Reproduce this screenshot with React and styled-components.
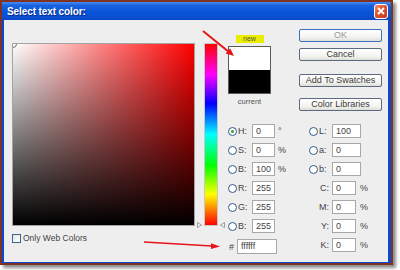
import styled, { createGlobalStyle } from "styled-components";

const GlobalStyle = createGlobalStyle`
  html, body { margin: 0; padding: 0; background: #ffffff; }
  body {
    width: 400px;
    height: 270px;
    overflow: hidden;
    font-family: "Liberation Sans", Arial, sans-serif;
  }
`;

const Frame = styled.div`
  position: relative;
  width: 389px;
  height: 261px;
  border: 2px solid #7d3222;
  box-shadow: 3px 3px 3px rgba(0, 0, 0, 0.45);
  background: #0b46d4;
  display: flex;
  flex-direction: column;
`;

const TitleBar = styled.div`
  height: 18px;
  flex: none;
  display: flex;
  align-items: center;
  justify-content: space-between;
  padding: 0 3px 0 5px;
  background: linear-gradient(#4a8cf0 0%, #1a63e0 18%, #0655d8 55%, #0a4fd0 85%, #0846c4 100%);
`;

const Title = styled.span`
  color: #ffffff;
  font-weight: bold;
  font-size: 10px;
  letter-spacing: -0.1px;
  text-shadow: 1px 1px 0 #0a2a8a;
`;

const CloseButton = styled.div`
  width: 14px;
  height: 15px;
  box-sizing: border-box;
  border: 1px solid #ffffff;
  border-radius: 3px;
  background: linear-gradient(135deg, #f08a64 0%, #dc5430 45%, #c23c16 100%);
  display: flex;
  align-items: center;
  justify-content: center;
`;

const Body = styled.div`
  flex: 1;
  margin: 0 3px 1px 2px;
  background: #eeeeee;
  display: flex;
  align-items: flex-start;
  padding: 9px 0 0 8px;
`;

const LeftCol = styled.div`
  margin-top: 14px;
  display: flex;
  flex-direction: column;
  gap: 7px;
`;

const ColorField = styled.div`
  position: relative;
  width: 183px;
  height: 183px;
  box-sizing: border-box;
  border: 1px solid #a3a3a3;
  overflow: hidden;
  background: linear-gradient(to bottom, rgba(0, 0, 0, 0), #000000),
    linear-gradient(to right, #ffffff, #ff0000);
`;

const FieldMarker = styled.div`
  position: absolute;
  top: -4px;
  left: -4px;
  width: 8px;
  height: 8px;
  box-sizing: border-box;
  border-radius: 50%;
  border: 1px solid #707070;
`;

const CheckRow = styled.label`
  display: flex;
  align-items: center;
  gap: 2px;
  font-size: 8.5px;
  color: #444444;
`;

const CheckBox = styled.span`
  width: 9px;
  height: 9px;
  box-sizing: border-box;
  border: 1px solid #3a6496;
  background: linear-gradient(135deg, #e4e4dc, #ffffff);
`;

const HueWrap = styled.div`
  position: relative;
  margin: 14px 0 0 9px;
  width: 14px;
  height: 183px;
`;

const HueBar = styled.div`
  width: 14px;
  height: 183px;
  box-sizing: border-box;
  border: 1px solid #c8c8c8;
  background: linear-gradient(
    to bottom,
    #ff0000 0%,
    #ff00ff 17%,
    #0000ff 33%,
    #00ffff 50%,
    #00ff00 67%,
    #ffff00 83%,
    #ff0000 100%
  );
`;

const HueArrow = styled.svg`
  position: absolute;
  bottom: -2px;
  ${(p) => (p.side === "left" ? "left: -7px;" : "right: -7px;")}
`;

const RightCol = styled.div`
  margin-left: 10px;
  display: flex;
  flex-direction: column;
`;

const TopRow = styled.div`
  display: flex;
  align-items: flex-start;
`;

const SwatchCol = styled.div`
  width: 43px;
  margin-top: 6px;
  display: flex;
  flex-direction: column;
  align-items: center;
`;

const NewTag = styled.div`
  width: 28px;
  height: 8px;
  background: #ecec00;
  color: #555555;
  font-size: 7px;
  line-height: 8px;
  text-align: center;
`;

const Swatch = styled.div`
  margin-top: 3px;
  width: 43px;
  height: 48px;
  box-sizing: border-box;
  border: 1px solid #5a5a5a;
  background: linear-gradient(to bottom, #ffffff 50%, #000000 50%);
`;

const SwatchCaption = styled.div`
  margin-top: 3px;
  font-size: 7.5px;
  color: #555555;
`;

const ButtonCol = styled.div`
  margin-left: 28px;
  display: flex;
  flex-direction: column;
`;

const Button = styled.div`
  width: 83px;
  height: 13px;
  box-sizing: border-box;
  margin-top: ${(p) => p.gap || 0}px;
  border: 1px solid ${(p) => (p.primary ? "#3c6fc0" : "#5b6a80")};
  border-radius: 2px;
  background: linear-gradient(#ffffff, #f2f2ee 70%, #dedcd6);
  color: ${(p) => (p.primary ? "#9a9a9a" : "#3a3a3a")};
  font-size: 9px;
  line-height: 11px;
  text-align: center;
`;

const FieldArea = styled.div`
  margin-top: 13px;
  display: flex;
`;

const FieldCol = styled.div`
  width: ${(p) => p.width || 81}px;
  display: flex;
  flex-direction: column;
  gap: 5px;
`;

const FieldRow = styled.div`
  display: flex;
  align-items: center;
  height: ${(p) => p.h || 14}px;
  margin-top: ${(p) => p.top || 0}px;
  font-size: 9px;
  color: #444444;
`;

const Radio = styled.span`
  position: relative;
  flex: none;
  width: 9px;
  height: 9px;
  box-sizing: border-box;
  border-radius: 50%;
  border: 1px solid #2e5a8e;
  background: #ffffff;
  &::after {
    content: "";
    display: ${(p) => (p.checked ? "block" : "none")};
    position: absolute;
    left: 2px;
    top: 2px;
    width: 3px;
    height: 3px;
    border-radius: 50%;
    background: #2fa32f;
  }
`;

const FieldLabel = styled.span`
  width: ${(p) => p.w}px;
  box-sizing: border-box;
  padding: ${(p) => (p.right ? "0 3px 0 0" : "0 0 0 1px")};
  text-align: ${(p) => (p.right ? "right" : "left")};
`;

const Input = styled.div`
  width: ${(p) => p.w}px;
  height: ${(p) => p.h || 14}px;
  box-sizing: border-box;
  border: 1px solid #a8a8a8;
  background: #ffffff;
  padding-left: 3px;
  font-size: 9px;
  line-height: ${(p) => (p.h || 14) - 2}px;
  color: #444444;
`;

const Unit = styled.span`
  margin-left: ${(p) => p.gap || 3}px;
`;

const Overlay = styled.svg`
  position: absolute;
  top: -2px;
  left: -2px;
  pointer-events: none;
`;

const leftFields = [
  { label: "H:", value: "0", unit: "°", checked: true },
  { label: "S:", value: "0", unit: "%" },
  { label: "B:", value: "100", unit: "%" },
  { label: "R:", value: "255" },
  { label: "G:", value: "255" },
  { label: "B:", value: "255" },
];

const labFields = [
  { label: "L:", value: "100" },
  { label: "a:", value: "0" },
  { label: "b:", value: "0" },
];

const cmykFields = ["C:", "M:", "Y:", "K:"];

export default function App() {
  return (
    <>
      <GlobalStyle />
      <Frame>
        <TitleBar>
          <Title>Select text color:</Title>
          <CloseButton>
            <svg width="8" height="8" viewBox="0 0 8 8">
              <path d="M1 1 L7 7 M7 1 L1 7" stroke="#ffffff" strokeWidth="1.8" />
            </svg>
          </CloseButton>
        </TitleBar>
        <Body>
          <LeftCol>
            <ColorField>
              <FieldMarker />
            </ColorField>
            <CheckRow>
              <CheckBox />
              Only Web Colors
            </CheckRow>
          </LeftCol>

          <HueWrap>
            <HueBar />
            <HueArrow side="left" width="5" height="6" viewBox="0 0 5 6">
              <path d="M0.5 0.5 L4.5 3 L0.5 5.5 Z" fill="#f4f4f4" stroke="#8a8a8a" strokeWidth="0.8" />
            </HueArrow>
            <HueArrow side="right" width="5" height="6" viewBox="0 0 5 6">
              <path d="M4.5 0.5 L0.5 3 L4.5 5.5 Z" fill="#f4f4f4" stroke="#8a8a8a" strokeWidth="0.8" />
            </HueArrow>
          </HueWrap>

          <RightCol>
            <TopRow>
              <SwatchCol>
                <NewTag>new</NewTag>
                <Swatch />
                <SwatchCaption>current</SwatchCaption>
              </SwatchCol>
              <ButtonCol>
                <Button primary>OK</Button>
                <Button gap={6}>Cancel</Button>
                <Button gap={13}>Add To Swatches</Button>
                <Button gap={11}>Color Libraries</Button>
              </ButtonCol>
            </TopRow>

            <FieldArea>
              <FieldCol>
                {leftFields.map((f, i) => (
                  <FieldRow key={i}>
                    <Radio checked={f.checked} />
                    <FieldLabel w={15}>{f.label}</FieldLabel>
                    <Input w={23}>{f.value}</Input>
                    {f.unit && <Unit>{f.unit}</Unit>}
                  </FieldRow>
                ))}
                <FieldRow h={15} top={1}>
                  <FieldLabel w={9} right>
                    #
                  </FieldLabel>
                  <Input w={40} h={15}>
                    ffffff
                  </Input>
                </FieldRow>
              </FieldCol>
              <FieldCol width={60}>
                {labFields.map((f, i) => (
                  <FieldRow key={i}>
                    <Radio />
                    <FieldLabel w={14}>{f.label}</FieldLabel>
                    <Input w={29}>{f.value}</Input>
                  </FieldRow>
                ))}
                {cmykFields.map((label, i) => (
                  <FieldRow key={i}>
                    <FieldLabel w={23} right>
                      {label}
                    </FieldLabel>
                    <Input w={24}>0</Input>
                    <Unit gap={4}>%</Unit>
                  </FieldRow>
                ))}
              </FieldCol>
            </FieldArea>
          </RightCol>
        </Body>

        <Overlay width="393" height="265" viewBox="0 0 393 265">
          <line x1="203" y1="31" x2="229" y2="52" stroke="#e8141c" strokeWidth="2" />
          <polygon points="234,56 225.6,53.6 230.2,48.2" fill="#e8141c" />
          <line x1="144" y1="242" x2="212" y2="246" stroke="#e8141c" strokeWidth="1.6" />
          <polygon points="220,246.5 211,243.2 211,249" fill="#e8141c" />
        </Overlay>
      </Frame>
    </>
  );
}
